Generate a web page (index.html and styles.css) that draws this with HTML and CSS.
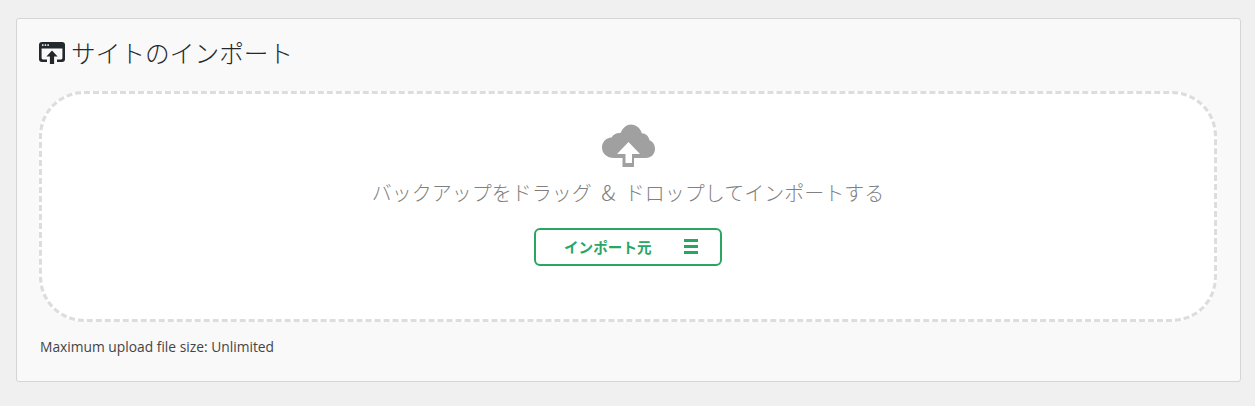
FILE: index.html
```html
<!DOCTYPE html>
<html lang="ja">
<head>
<meta charset="utf-8">
<title>サイトのインポート</title>
<link rel="stylesheet" href="styles.css">
</head>
<body>
<div class="panel">
	<h2 class="panel_title">
		<svg class="title_icon" viewBox="0 0 26 22" width="26" height="22">
			<path d="M3 0h20a3 3 0 0 1 3 3v14a3 3 0 0 1-3 3h-5v-2.600h4a1.400 1.400 0 0 0 1.400-1.400V6.500H2.600V16a1.400 1.400 0 0 0 1.400 1.400h4V20H3a3 3 0 0 1-3-3V3a3 3 0 0 1 3-3z" fill="#23282d"/>
			<path d="M13 8.500l5.600 6h-3.500V22h-4.200v-7.500H7.400z" fill="#23282d"/>
			<rect x="3" y="2.300" width="1.500" height="1.600" fill="#f9f9f9"/>
			<rect x="5.700" y="2.300" width="1.500" height="1.600" fill="#f9f9f9"/>
			<rect x="8.400" y="2.300" width="1.500" height="1.600" fill="#f9f9f9"/>
		</svg>
		<span class="title_text">サイトのインポート</span>
	</h2>
	<div class="drop_zone">
		<svg class="cloud_icon" viewBox="0 0 54 44" width="54" height="44">
			<path d="M13 34C6 34 1 29.500 1 23.500 1 18 5 13.800 10.500 13.500 12.500 10 16 8.500 19.500 9 22 3.500 25.500 .5 30 .5c5 0 9.500 3.500 10.800 8.800 4 .2 7 3 7.700 7C51.500 17.500 54 20.500 54 25 54 30 50 34 45 34z" fill="#a0a0a0"/>
			<path d="M21.500 30h11.500v13H21.500z" fill="#a0a0a0"/>
			<path d="M27.500 18L39 30H31v9H24.500V30H16z" fill="#fff"/>
		</svg>
		<p class="drop_text">バックアップをドラッグ <span class="amp">&amp;</span> ドロップしてインポートする</p>
		<button class="import_btn">
			<span class="btn_text">インポート元</span>
			<span class="menu_icon"><i></i><i></i><i></i></span>
		</button>
	</div>
	<p class="upload_size">Maximum upload file size: Unlimited</p>
</div>
</body>
</html>
```

FILE: styles.css
```css
*{margin:0;padding:0;box-sizing:border-box;}
body{background:#f0f0f0;padding:18px 14px 24px 16px;font-family:"Open Sans","Noto Sans CJK JP",sans-serif;color:#444;}
.panel{height:364px;background:#f9f9f9;border:1px solid #d5d5d5;border-radius:3px;padding:21px 23px 0 22px;}
.panel_title{display:flex;align-items:center;gap:6px;height:26px;font-family:"Noto Sans CJK JP",sans-serif;font-size:24.700px;font-weight:300;color:#23282d;line-height:26px;}
.title_icon{flex:none;}
.title_text{margin-top:-2px;}
.drop_zone{margin-top:25px;height:231px;background:#fff;border:3px dashed #ddd;border-radius:45px;display:flex;flex-direction:column;align-items:center;padding-top:30px;}
.cloud_icon{flex:none;}
.drop_text{margin-top:10px;height:30px;font-family:"Noto Sans CJK JP",sans-serif;font-size:20px;font-weight:300;word-spacing:5px;line-height:30px;color:#808080;}
.amp{font-size:22px;line-height:0;}
.import_btn{margin-top:20px;width:188px;height:38px;background:#fff;border:2px solid #2ba562;border-radius:6px;display:flex;align-items:center;justify-content:space-between;padding:0 22px 0 28px;font-family:"Noto Sans CJK JP",sans-serif;font-size:14.6px;font-weight:700;color:#2ba562;}
.btn_text{margin-top:-2px;}
.menu_icon{display:flex;flex-direction:column;gap:3px;width:14px;margin-top:-2px;}
.menu_icon i{display:block;height:3px;background:#2ba562;}
.upload_size{margin-top:15px;padding-left:1px;font-size:13.800px;line-height:20px;color:#444;}
```
